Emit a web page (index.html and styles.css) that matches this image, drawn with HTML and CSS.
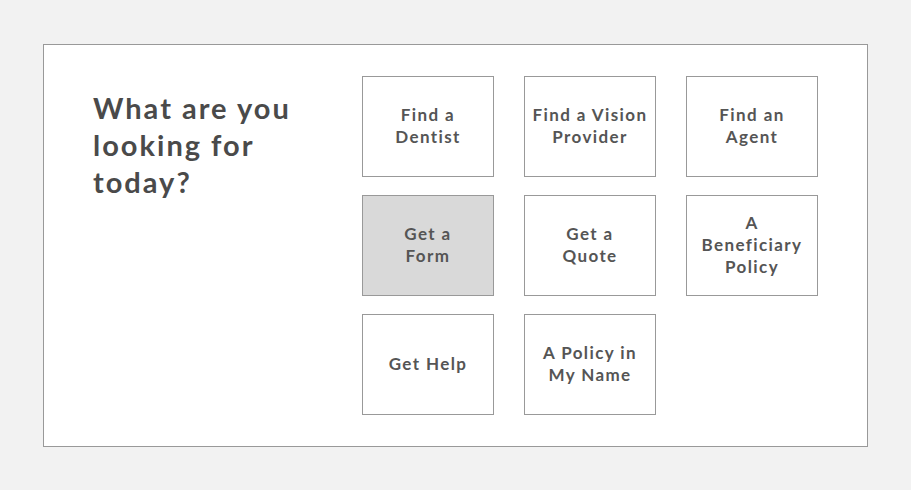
FILE: index.html
```html
<!DOCTYPE html>
<html lang="en">
<head>
    <meta charset="UTF-8">
    <meta name="viewport" content="width=device-width, initial-scale=1.0">
    <title>What are you looking for today?</title>
    <link rel="stylesheet" href="styles.css">
</head>
<body>
    <div class="card">
        <div class="intro">
            <h1>What are you looking for today?</h1>
        </div>
        <div class="options">
            <a class="option" href="#">Find a<br>Dentist</a>
            <a class="option" href="#">Find a Vision<br>Provider</a>
            <a class="option" href="#">Find an<br>Agent</a>
            <a class="option active" href="#">Get a<br>Form</a>
            <a class="option" href="#">Get a<br>Quote</a>
            <a class="option" href="#">A<br>Beneficiary<br>Policy</a>
            <a class="option" href="#">Get Help</a>
            <a class="option" href="#">A Policy in<br>My Name</a>
        </div>
    </div>
</body>
</html>
```

FILE: styles.css
```css
body {
    font-family: Lato, "Noto Sans", sans-serif;
    background-color: #f2f2f2;
    margin: 0;
    padding: 44px 43px;
}
.card {
    background-color: #fff;
    border: 1px solid #999;
    padding: 31px 49px;
    display: flex;
}
.intro {
    flex: 1;
}
.intro h1 {
    margin: 13px 0 0;
    width: 230px;
    font-size: 29px;
    line-height: 37px;
    font-weight: 700;
    letter-spacing: 2px;
    color: #4a4a4a;
}
.options {
    display: grid;
    grid-template-columns: repeat(3, 132px);
    grid-auto-rows: 101px;
    column-gap: 30px;
    row-gap: 18px;
}
.option {
    box-sizing: border-box;
    border: 1px solid #999;
    display: flex;
    align-items: center;
    justify-content: center;
    text-align: center;
    padding: 0 4px 2px;
    font-size: 17px;
    line-height: 22px;
    font-weight: 700;
    letter-spacing: 1.4px;
    color: #555;
    text-decoration: none;
}
.option.active {
    background-color: #d9d9d9;
}
```
